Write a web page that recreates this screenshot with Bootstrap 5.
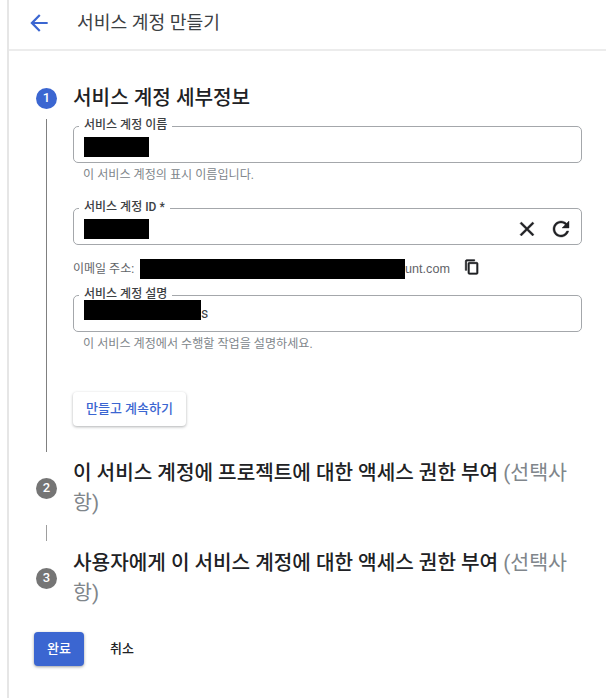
<!DOCTYPE html>
<html lang="ko"><head><meta charset="utf-8">
<link href="https://cdn.jsdelivr.net/npm/bootstrap@5.3.0/dist/css/bootstrap.min.css" rel="stylesheet">
<style>
html,body{height:698px;overflow:hidden;background:#fff}
body{font-family:Roboto,"Noto Sans CJK KR",sans-serif;color:#202124}
.shell{margin-left:7px;border-left:2px solid #e6e6e6;height:698px}
.topbar{height:51px;border-bottom:2px solid #ececec;padding:0 0 3px 17px}
.topbar svg{fill:#3b66d1}
.toptitle{font-size:18.2px;margin-left:25px;color:#3c4043;line-height:1}
.stepwrap{padding:32px 24px 0 27px}
.stepnum{width:21px;height:21px;border-radius:50%;flex:none;color:#fff;font-size:13px;font-weight:500;background:#757575;margin-right:16px}
.stepnum.on{background:#3b66d1}
.stephead{font-size:20.2px;line-height:30px;font-weight:500;color:#202124;margin:0}
.stephead span{color:#80868b;font-weight:400;font-size:20.6px}
.stepbody{margin-left:10px;border-left:1px solid #808080;margin-top:6px;padding:1px 0 0 26px;height:333px}
.rule{width:1px;height:16px;background:#9e9e9e;margin:7px 0 7px 10px}
fieldset.fld{border:1px solid #a4a7ab;border-radius:5px;height:43px;padding:0 10px;width:509px;margin:0;display:block;min-width:0}
fieldset.fld legend{float:none;width:auto;font-size:12px;line-height:10px;height:12px;font-weight:500;color:#3c4043;padding:0 5px;margin:0 0 0 -5px}
.fldrow{height:26px;margin-top:5px;font-size:14px;color:#3c4043;line-height:26px}
.fldrow.tight{margin-top:-1px}
.ink{display:inline-block;background:#000;height:20px;vertical-align:top}
.w65{width:65px}.w117{width:117px}.w265{width:265px}
.hint{font-size:12.1px;line-height:14px;color:#80868b;margin:5px 0 0 10px}
.mailrow{font-size:12px;color:#5f6368;height:20px;line-height:20px;margin:14px 0 0 0}
.mailtail{font-family:"Liberation Sans",Arial,sans-serif;font-size:12.6px}
.mailrow svg{fill:#202124;stroke:#202124;stroke-width:1;margin:-5px 0 0 14px}
.fldicons svg{fill:#202124;stroke:#202124;stroke-width:.4}
.btn.keepgo{font-size:13px;font-weight:500;color:#3b66d1;background:#fff;border:0;border-radius:4px;padding:0 13px;height:34px;box-shadow:0 1px 3px rgba(60,64,67,.4);margin-top:41px}
.btn.finish{background:#3b66d1;color:#fff;font-size:13px;font-weight:500;width:50px;height:34px;padding:0;border:0;border-radius:4px;box-shadow:0 1px 3px rgba(60,64,67,.5)}
.btn.dismiss{font-size:13px;font-weight:500;color:#202124;padding:0;border:0;margin-left:26px;background:none}
.actions{padding:24px 0 0 25px}
</style></head><body>
<div class="shell">
 <div class="topbar d-flex align-items-center">
  <svg width="26" height="26" viewBox="0 0 24 24"><path d="M20 11H7.83l5.59-5.59L12 4l-8 8 8 8 1.41-1.41L7.83 13H20v-2z"/></svg>
  <div class="toptitle">서비스 계정 만들기</div>
 </div>
 <div class="stepwrap">
  <div class="d-flex align-items-center">
   <div class="stepnum on d-flex align-items-center justify-content-center">1</div>
   <h2 class="stephead">서비스 계정 세부정보</h2>
  </div>
  <div class="stepbody">
   <fieldset class="fld"><legend>서비스 계정 이름</legend>
    <div class="fldrow"><span class="ink w65"></span></div>
   </fieldset>
   <p class="hint">이 서비스 계정의 표시 이름입니다.</p>
   <fieldset class="fld" style="margin-top:20px"><legend>서비스 계정 ID *</legend>
    <div class="fldrow d-flex align-items-start justify-content-between"><span class="ink w65"></span>
     <span class="fldicons d-flex align-items-center gap-2" style="margin:-2px -2px 0 0">
      <svg width="24" height="24" viewBox="0 0 24 24"><path d="M19 6.41L17.59 5 12 10.59 6.41 5 5 6.41 10.59 12 5 17.59 6.41 19 12 13.41 17.59 19 19 17.59 13.41 12z"/></svg>
      <svg width="24" height="24" viewBox="0 0 24 24" style="margin-left:2px"><path d="M17.65 6.35C16.2 4.9 14.21 4 12 4c-4.42 0-7.99 3.58-7.99 8s3.57 8 7.99 8c3.73 0 6.84-2.55 7.73-6h-2.08c-.82 2.33-3.04 4-5.65 4-3.31 0-6-2.69-6-6s2.69-6 6-6c1.66 0 3.14.69 4.22 1.78L13 11h7V4l-2.35 2.35z"/></svg>
     </span>
    </div>
   </fieldset>
   <div class="mailrow d-flex align-items-center">이메일 주소: <span class="ink w265" style="margin-left:6px"></span><span class="mailtail">unt.com</span>
    <svg width="16" height="16" viewBox="0 0 24 24"><path d="M16 1H4c-1.1 0-2 .9-2 2v14h2V3h12V1zm3 4H8c-1.1 0-2 .9-2 2v14c0 1.1.9 2 2 2h11c1.1 0 2-.9 2-2V7c0-1.1-.9-2-2-2zm0 16H8V7h11v14z"/></svg>
   </div>
   <fieldset class="fld" style="margin-top:10px"><legend>서비스 계정 설명</legend>
    <div class="fldrow tight"><span class="ink w117"></span>s</div>
   </fieldset>
   <p class="hint">이 서비스 계정에서 수행할 작업을 설명하세요.</p>
   <button type="button" class="btn keepgo">만들고 계속하기</button>
  </div>
  <div class="d-flex align-items-center" style="margin-top:6px">
   <div class="stepnum d-flex align-items-center justify-content-center">2</div>
   <h2 class="stephead">이 서비스 계정에 프로젝트에 대한 액세스 권한 부여 <span>(선택사항)</span></h2>
  </div>
  <div class="rule"></div>
  <div class="d-flex align-items-center">
   <div class="stepnum d-flex align-items-center justify-content-center">3</div>
   <h2 class="stephead">사용자에게 이 서비스 계정에 대한 액세스 권한 부여 <span>(선택사항)</span></h2>
  </div>
 </div>
 <div class="actions d-flex align-items-center">
  <button type="button" class="btn finish">완료</button>
  <button type="button" class="btn dismiss">취소</button>
 </div>
</div>
</body></html>
